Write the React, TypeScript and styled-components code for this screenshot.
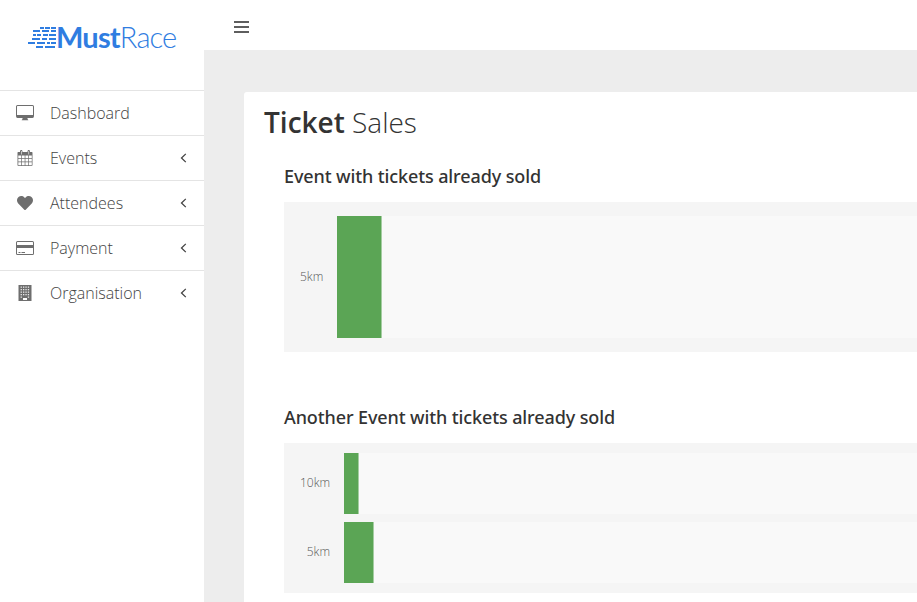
import React from "react";
import styled, { createGlobalStyle } from "styled-components";
import { FaHeart } from "react-icons/fa";

const GlobalStyle = createGlobalStyle`
  *, *::before, *::after { box-sizing: border-box; }
  html, body { margin: 0; padding: 0; overflow: hidden; background: #fff; }
  body { font-family: "Open Sans", "Noto Sans", sans-serif; color: #333; }
`;

const Shell = styled.div`
  display: flex;
  width: 100%;
  height: 100vh;
  overflow: hidden;
`;

const Sidebar = styled.aside`
  flex: 0 0 204px;
  background: #fff;
`;

const Logo = styled.div`
  display: flex;
  align-items: flex-start;
  height: 90px;
  padding: 26px 0 0 28px;
  color: #2f7de1;
`;

const SpeedMark = styled.svg`
  flex: none;
  width: 28px;
  height: 24px;
  fill: currentColor;
  shape-rendering: crispEdges;
`;

const Wordmark = styled.div`
  margin-top: -1px;
  font: 300 29px/24px Lato, sans-serif;
  letter-spacing: -0.85px;
  white-space: nowrap;

  b { font-weight: 700; letter-spacing: -0.8px; }
`;

const MenuItem = styled.a`
  display: flex;
  align-items: center;
  height: 45px;
  padding: 0 16px;
  border-top: 1px solid #e4e4e4;
  color: #444;
  font-size: 16px;
  font-weight: 300;
`;

const IconSlot = styled.span`
  display: flex;
  justify-content: center;
  width: 18px;
  margin-right: 16px;
  color: #6e6e6e;

  svg { display: block; }
`;

const MenuLabel = styled.span`
  flex: 1;
`;

const Chevron = styled.svg`
  width: 7px;
  height: 10px;
  margin-right: 1px;
  fill: none;
  stroke: #444;
  stroke-width: 1.3;
`;

const Main = styled.div`
  flex: 1;
  min-width: 0;
  background: #ededed;
`;

const TopBar = styled.header`
  height: 50px;
  padding: 21px 30px 0;
  background: #fff;
`;

const Burger = styled.svg`
  display: block;
  width: 15px;
  height: 12px;
  fill: #5e5e5e;
`;

const Card = styled.section`
  height: 600px;
  margin: 42px 0 0 40px;
  padding: 10px 0 0 20px;
  border-radius: 3px 0 0 0;
  background: #fff;
`;

const Title = styled.h1`
  margin: 0;
  font-size: 28px;
  line-height: 40px;
  font-weight: 300;

  b { font-weight: 600; }
`;

const EventBlock = styled.article<{ $offset: number }>`
  margin: ${(p) => p.$offset}px 0 0 20px;
`;

const EventName = styled.h2`
  margin: 0 0 11px;
  font: 500 18px/30px "Noto Sans", sans-serif;
  letter-spacing: -0.11px;
`;

const Chart = styled.div<{ $pad: number }>`
  display: flex;
  flex-direction: column;
  gap: 8px;
  height: 150px;
  padding: ${(p) => p.$pad}px 0 ${(p) => p.$pad}px 16px;
  background: #f5f5f5;
`;

const ChartRow = styled.div`
  flex: 1;
  display: flex;
  align-items: stretch;
  min-height: 0;
`;

const ChartLabel = styled.span<{ $width: number }>`
  flex: none;
  align-self: center;
  width: ${(p) => p.$width}px;
  margin: 0 14px 1px 0;
  color: #555;
  font-size: 12px;
  font-weight: 300;
  line-height: 16px;
  text-align: right;
  white-space: nowrap;
`;

const Track = styled.div`
  flex: 1;
  display: flex;
  background: #f9f9f9;
`;

const Bar = styled.div<{ $value: number }>`
  width: ${(p) => Math.ceil(p.$value)}px;
  background: linear-gradient(to right, #5ba555 ${(p) => Math.floor(p.$value)}px, #a5cda2 0);
`;

const DesktopIcon = () => (
  <svg width="18" height="16" viewBox="0 0 18 16" fill="currentColor">
    <path fillRule="evenodd" d="M1.500 0h15Q18 0 18 1.500V11Q18 13 16.500 13H11.500V14L12.300 15V15.300H5.700V15L6.500 14V13H1.500Q0 13 0 11V1.500Q0 0 1.500 0ZM1.500 1Q1 1 1 1.500V10H17V1.500Q17 1 16.500 1Z" />
  </svg>
);

const CalendarIcon = () => (
  <svg width="16" height="16" viewBox="0 0 16 16" fill="currentColor">
    <path fillRule="evenodd" d="M1 2h2V1.500C3 .5 3.500 0 4.250 0S5.500 .5 5.500 1.500V2h5V1.500C10.500 .5 11 0 11.750 0S13 .5 13 1.500V2h2Q15.500 2 15.500 3V15Q15.500 16 14.500 16H1.500Q.5 16 .5 15V3Q.5 2 1 2ZM4 1v3.500h.6V1ZM11.500 1v3.500h.6V1ZM1.300 5.500v2.500h2.900V5.500ZM4.900 5.500v2.500h2.800V5.500ZM8.400 5.500v2.500h2.800V5.500ZM11.900 5.500v2.500h2.900V5.500ZM1.300 8.700v2.900h2.900V8.700ZM4.900 8.700v2.900h2.800V8.700ZM8.400 8.700v2.900h2.800V8.700ZM11.900 8.700v2.900h2.900V8.700ZM1.300 12.300v2.900h2.900v-2.900ZM4.900 12.300v2.900h2.800v-2.900ZM8.400 12.300v2.900h2.800v-2.900ZM11.900 12.300v2.900h2.900v-2.900Z" />
  </svg>
);

const CardIcon = () => (
  <svg width="18" height="14" viewBox="0 0 18 14" fill="currentColor">
    <path fillRule="evenodd" d="M1.500 0h15Q18 0 18 1.500V12.500Q18 14 16.500 14H1.500Q0 14 0 12.500V1.500Q0 0 1.500 0ZM1.500 1Q1 1 1 1.500V4H17V1.500Q17 1 16.500 1ZM1 7V12.500Q1 13 1.500 13H16.500Q17 13 17 12.500V7Z" />
    <path d="M2.500 11h2v1h-2ZM5.500 11h3.500v1H5.500Z" />
  </svg>
);

const BuildingIcon = () => (
  <svg width="14" height="16" viewBox="0 0 14 16" fill="currentColor">
    <path fillRule="evenodd" d="M.5 0h13v16H.5ZM5 13h4v2H5Z" />
    <g fill="#fff" fillOpacity="0.85">
      {[1.5, 4, 6.5, 9].map((y) =>
        [2.6, 5, 7.4, 9.8].map((x) => <rect key={`${x}-${y}`} x={x} y={y} width="1.300" height="1.300" />)
      )}
      <path d="M2.600 11.500h1.300v1.300H2.600ZM9.800 11.500h1.300v1.300H9.800Z" />
    </g>
  </svg>
);

const menu = [
  { label: "Dashboard", icon: <DesktopIcon />, expandable: false },
  { label: "Events", icon: <CalendarIcon />, expandable: true },
  { label: "Attendees", icon: <FaHeart size={16} />, expandable: true },
  { label: "Payment", icon: <CardIcon />, expandable: true },
  { label: "Organisation", icon: <BuildingIcon />, expandable: true },
];

const events = [
  { name: "Event with tickets already sold", offset: 19, pad: 14, labelWidth: 23, rows: [{ label: "5km", value: 44.6 }] },
  {
    name: "Another Event with tickets already sold",
    offset: 50,
    pad: 10,
    labelWidth: 30,
    rows: [{ label: "10km", value: 14.6 }, { label: "5km", value: 29.3 }],
  },
];

const dashes = [
  [12, 1, 4], [17, 1, 5], [23, 1, 5],
  [5, 4, 7], [14, 4, 7], [23, 4, 5],
  [5, 8, 3], [9, 8, 4], [15, 8, 5], [21, 8, 7],
  [4, 12, 8], [14, 12, 5], [21, 12, 7],
  [0, 16, 7], [9, 16, 8], [19, 16, 3], [23, 16, 5],
  [8, 20, 7], [17, 20, 10],
];

export default function App() {
  return (
    <Shell>
      <GlobalStyle />
      <Sidebar>
        <Logo>
          <SpeedMark viewBox="0 0 28 24">
            {dashes.map(([x, y, w]) => (
              <rect key={`${x}-${y}`} x={x} y={y} width={w} height="2" />
            ))}
          </SpeedMark>
          <Wordmark><b>Must</b>Race</Wordmark>
        </Logo>
        <nav>
          {menu.map((item) => (
            <MenuItem key={item.label}>
              <IconSlot>{item.icon}</IconSlot>
              <MenuLabel>{item.label}</MenuLabel>
              {item.expandable && (
                <Chevron viewBox="0 0 7 10"><path d="M5.800 .9 1.500 5 5.800 9.100" /></Chevron>
              )}
            </MenuItem>
          ))}
        </nav>
      </Sidebar>
      <Main>
        <TopBar>
          <Burger viewBox="0 0 15 12"><path d="M0 0h15v2H0ZM0 5h15v2H0ZM0 10h15v2H0Z" /></Burger>
        </TopBar>
        <Card>
          <Title><b>Ticket</b> Sales</Title>
          {events.map((event) => (
            <EventBlock key={event.name} $offset={event.offset}>
              <EventName>{event.name}</EventName>
              <Chart $pad={event.pad}>
                {event.rows.map((row) => (
                  <ChartRow key={row.label}>
                    <ChartLabel $width={event.labelWidth}>{row.label}</ChartLabel>
                    <Track>
                      <Bar $value={row.value} />
                    </Track>
                  </ChartRow>
                ))}
              </Chart>
            </EventBlock>
          ))}
        </Card>
      </Main>
    </Shell>
  );
}
